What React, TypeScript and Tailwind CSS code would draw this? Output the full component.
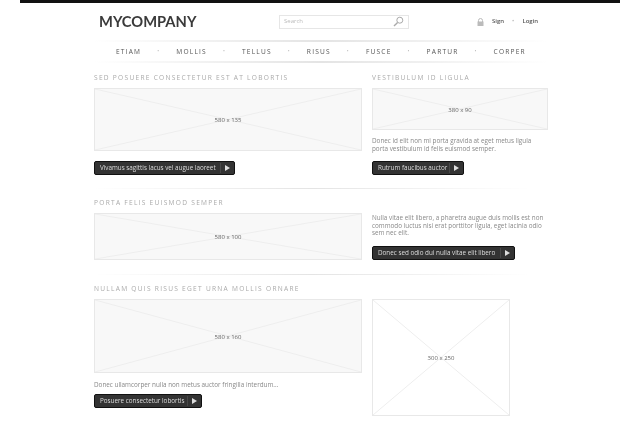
const NAV = ["ETIAM", "MOLLIS", "TELLUS", "RISUS", "FUSCE", "PARTUR", "CORPER"];

function Placeholder({ label, className }: { label: string; className: string }) {
  return (
    <div className={`relative flex items-center justify-center border border-[#e8e8e8] ${className}`}>
      <svg className="absolute inset-0 h-full w-full" preserveAspectRatio="none" viewBox="0 0 100 100">
        <line x1="0" y1="0" x2="100" y2="100" stroke="#eeeeee" strokeWidth="1" vectorEffect="non-scaling-stroke" />
        <line x1="100" y1="0" x2="0" y2="100" stroke="#eeeeee" strokeWidth="1" vectorEffect="non-scaling-stroke" />
      </svg>
      <span className="relative top-[1px] text-[6px] text-[#666]">{label}</span>
    </div>
  );
}

function DarkButton({ label, className }: { label: string; className: string }) {
  return (
    <div className={`flex h-[14px] items-center rounded-[2px] border border-[#111] bg-[#333] pl-[5px] text-[6.3px] text-[#ddd] ${className}`}>
      <span className="flex-1 whitespace-nowrap">{label}</span>
      <span className="flex h-[10px] w-[14px] items-center justify-center border-l border-[#484848]">
        <span className="border-y-[3px] border-l-[5px] border-y-transparent border-l-[#ddd]" />
      </span>
    </div>
  );
}

function Heading({ children }: { children: string }) {
  return <h2 className="h-[11px] text-[6.6px] leading-[11px] tracking-[1.27px] whitespace-nowrap text-[#aaa]">{children}</h2>;
}

function Para({ children, className = "" }: { children: React.ReactNode; className?: string }) {
  return <p className={`text-[6.33px] leading-[7.5px] text-[#888] ${className}`}>{children}</p>;
}

function Rule({ className }: { className: string }) {
  return <div className={`bg-linear-to-r from-transparent via-[#e4e4e4] to-transparent ${className}`} />;
}

export default function App() {
  return (
    <div className="h-[425px] w-[640px] overflow-hidden bg-white font-['Open_Sans','Liberation_Sans',sans-serif] blur-[0.4px]">
      <div className="mx-[20px] h-[3px] bg-[#111]" />
      <div className="ml-[94px] w-[454px]">
        <header className="flex h-[37px] items-center">
          <div className="ml-[5px] w-[180px] font-['Lato',sans-serif] text-[14.7px] font-bold text-[#3a3a3a]">MYCOMPANY</div>
          <div className="flex h-[14px] w-[130px] items-center justify-between border border-[#e6e6e6] px-[4px] text-[6px] text-[#bbb]">
            <span>Search</span>
            <svg width="11" height="11" viewBox="0 0 11 11" fill="none" stroke="#aaa" strokeWidth="1">
              <circle cx="6.8" cy="4.2" r="3" />
              <line x1="4.6" y1="6.4" x2="1" y2="10" strokeWidth="1.4" />
            </svg>
          </div>
          <div className="ml-[68px] flex items-center text-[6px] font-semibold text-[#555]">
            <svg width="7" height="8" viewBox="0 0 7 8" className="mr-[8px]">
              <path d="M1.5 4V2.5a2 2 0 0 1 4 0V4" fill="none" stroke="#bbb" />
              <rect x="0.5" y="3.5" width="6" height="4.5" fill="#bbb" />
            </svg>
            <span>Sign</span>
            <span className="mx-[8px] text-[#bbb]">•</span>
            <span>Login</span>
          </div>
        </header>
        <Rule className="h-[2px]" />
        <nav className="flex h-[19px] items-center justify-between px-[22px] text-[6.6px] tracking-[1.2px] text-[#555]">
          {NAV.map((item, i) => (
            <div key={item} className="contents">
              {i > 0 && <span className="text-[5px] text-[#bbb]">•</span>}
              <span>{item}</span>
            </div>
          ))}
        </nav>
        <Rule className="h-[2px]" />

        <section className="mt-[9px] flex gap-[10px]">
          <div className="w-[268px]">
            <Heading>SED POSUERE CONSECTETUR EST AT LOBORTIS</Heading>
            <Placeholder label="580 x 135" className="mt-[5px] h-[63px] bg-[#f8f8f8]" />
            <DarkButton label="Vivamus sagittis lacus vel augue laoreet" className="mt-[10px] w-[141px]" />
          </div>
          <div className="w-[176px]">
            <Heading>VESTIBULUM ID LIGULA</Heading>
            <Placeholder label="380 x 90" className="mt-[5px] h-[42px] bg-[#f8f8f8]" />
            <Para className="mt-[7px]">
              Donec id elit non mi porta gravida at eget metus ligula
              <br />
              porta vestibulum id felis euismod semper.
            </Para>
            <DarkButton label="Rutrum faucibus auctor" className="mt-[9px] w-[92px]" />
          </div>
        </section>

        <Rule className="mt-[13px] h-px w-[436px]" />

        <section className="mt-[8px] flex gap-[10px]">
          <div className="w-[268px]">
            <Heading>PORTA FELIS EUISMOD SEMPER</Heading>
            <Placeholder label="580 x 100" className="mt-[5px] h-[47px] bg-[#f8f8f8]" />
          </div>
          <div className="w-[176px] pt-[17px]">
            <Para>
              Nulla vitae elit libero, a pharetra augue duis mollis est non
              <br />
              commodo luctus nisi erat porttitor ligula, eget lacinia odio
              <br />
              sem nec elit.
            </Para>
            <DarkButton label="Donec sed odio dui nulla vitae elit libero" className="mt-[9px] w-[143px]" />
          </div>
        </section>

        <Rule className="mt-[14px] h-px w-[436px]" />

        <section className="mt-[8px] flex gap-[10px]">
          <div className="w-[268px]">
            <Heading>NULLAM QUIS RISUS EGET URNA MOLLIS ORNARE</Heading>
            <Placeholder label="580 x 160" className="mt-[5px] h-[74px] bg-[#f8f8f8]" />
            <Para className="mt-[8px]">Donec ullamcorper nulla non metus auctor fringilla interdum...</Para>
            <DarkButton label="Posuere consectetur lobortis" className="mt-[5.5px] w-[108px]" />
          </div>
          <div className="pt-[16px]">
            <Placeholder label="300 x 250" className="h-[117px] w-[138px] bg-white" />
          </div>
        </section>
      </div>
    </div>
  );
}
